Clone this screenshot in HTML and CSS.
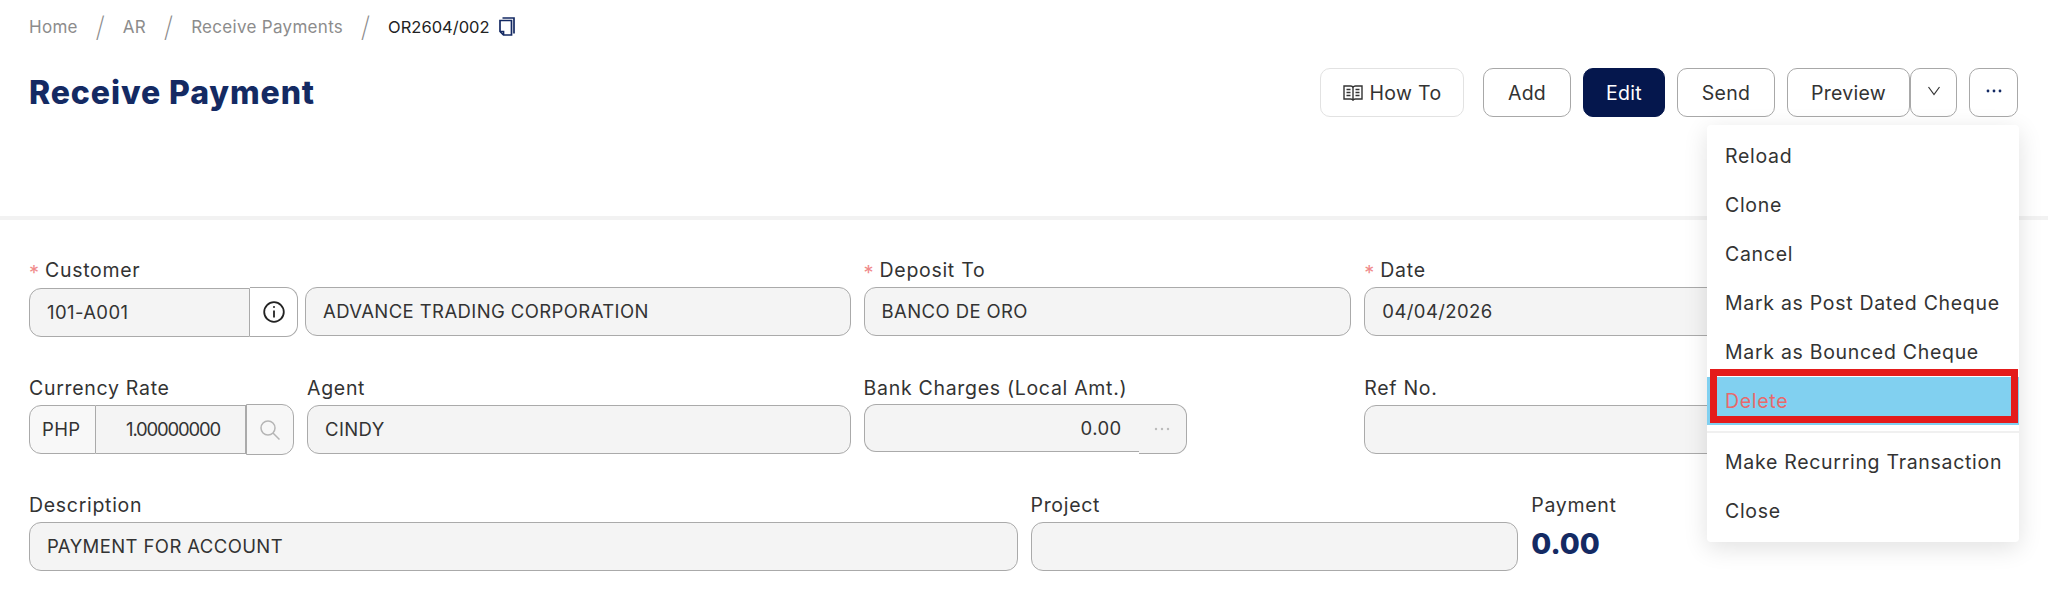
FILE: index.html
```html
<!DOCTYPE html>
<html lang="en">
<head>
    <meta charset="UTF-8">
    <title>Receive Payment</title>
    <link rel="stylesheet" href="styles.css">
</head>
<body>

    <!-- Breadcrumb and title -->
    <header class="page-header">
        <nav class="breadcrumb">
            <a class="crumb">Home</a>
            <span class="crumb-sep">/</span>
            <a class="crumb">AR</a>
            <span class="crumb-sep">/</span>
            <a class="crumb">Receive Payments</a>
            <span class="crumb-sep">/</span>
            <span class="crumb-current">OR2604/002</span>
            <svg class="copy-icon" viewBox="0 0 16 19" width="16" height="19" fill="none" stroke="#142a63" stroke-width="1.7">
                <path d="M3.5 1H15V16.5"/>
                <path d="M1 3.5H12.5V18H4.5L1 14.5Z"/>
                <path d="M1 14.5H4.5V18"/>
            </svg>
        </nav>

        <div class="title-row">
            <h1 class="page-title">Receive Payment</h1>
            <div class="toolbar">
                <button class="btn btn-light">
                    <svg class="book-icon" viewBox="0 0 20 16" width="20" height="16" fill="none" stroke="#333" stroke-width="1.4">
                        <path d="M1 1H7.5C8.8 1 10 1.8 10 3C10 1.8 11.2 1 12.5 1H19V14H12.5C11.2 14 10 14.5 10 15.5C10 14.5 8.8 14 7.5 14H1Z"/>
                        <path d="M10 3V15.5"/>
                        <path d="M3.5 4.5H7.5M3.5 7.5H7.5M3.5 10.5H7.5M12.5 4.5H16.5M12.5 7.5H16.5M12.5 10.5H16.5"/>
                    </svg>
                    How To
                </button>
                <button class="btn btn-add">Add</button>
                <button class="btn btn-primary">Edit</button>
                <button class="btn btn-send">Send</button>
                <div class="btn-group">
                    <button class="btn btn-preview">Preview</button>
                    <button class="btn btn-caret">
                        <svg viewBox="0 0 14 10" width="14" height="10" fill="none" stroke="#333" stroke-width="1.2"><path d="M1.5 1L7 8.5L12.5 1"/></svg>
                    </button>
                </div>
                <button class="btn btn-more">
                    <svg viewBox="0 0 16 4" width="16" height="4" fill="#142a63"><circle cx="2" cy="2" r="1.4"/><circle cx="8" cy="2" r="1.4"/><circle cx="14" cy="2" r="1.4"/></svg>
                </button>
            </div>
        </div>
    </header>

    <!-- Form -->
    <main class="form-grid">
        <div class="field span-5">
            <label class="field-label"><span class="required">*</span>Customer</label>
            <div class="field-row">
                <div class="input-group group-customer">
                    <div class="input input-code">101-A001</div>
                    <div class="addon addon-info">
                        <svg viewBox="0 0 22 22" width="22" height="22" fill="none" stroke="#222" stroke-width="1.8">
                            <circle cx="11" cy="11" r="9.8"/>
                            <path d="M11 9.5V16.5"/>
                            <circle cx="11" cy="6" r="0.4" fill="#222" stroke-width="1.2"/>
                        </svg>
                    </div>
                </div>
                <div class="input grow">ADVANCE TRADING CORPORATION</div>
            </div>
        </div>
        <div class="field span-3">
            <label class="field-label"><span class="required">*</span>Deposit To</label>
            <div class="input">BANCO DE ORO</div>
        </div>
        <div class="field span-3">
            <label class="field-label"><span class="required">*</span>Date</label>
            <div class="input">04/04/2026</div>
        </div>

        <div class="field-split span-5">
            <div class="field field-currency">
                <label class="field-label">Currency Rate</label>
                <div class="input-group group-currency">
                    <div class="input input-cur">PHP</div>
                    <div class="input input-rate">1.00000000</div>
                    <div class="addon addon-search">
                        <svg viewBox="0 0 22 22" width="22" height="22" fill="none" stroke="#b5b5b5" stroke-width="1.5">
                            <circle cx="9" cy="9" r="7"/>
                            <path d="M14 14L20.5 20.5"/>
                        </svg>
                    </div>
                </div>
            </div>
            <div class="field grow">
                <label class="field-label">Agent</label>
                <div class="input">CINDY</div>
            </div>
        </div>
        <div class="field span-3">
            <label class="field-label">Bank Charges (Local Amt.)</label>
            <div class="input-group group-charges">
                <div class="input input-amount">0.00</div>
                <div class="addon addon-dots">
                    <svg viewBox="0 0 16 4" width="16" height="4" fill="#bbb"><circle cx="2" cy="2" r="1.2"/><circle cx="8" cy="2" r="1.2"/><circle cx="14" cy="2" r="1.2"/></svg>
                </div>
            </div>
        </div>
        <div class="field span-3">
            <label class="field-label">Ref No.</label>
            <div class="input"></div>
        </div>

        <div class="field span-6">
            <label class="field-label">Description</label>
            <div class="input">PAYMENT FOR ACCOUNT</div>
        </div>
        <div class="field span-3">
            <label class="field-label">Project</label>
            <div class="input"></div>
        </div>
        <div class="field span-3">
            <label class="field-label">Payment</label>
            <div class="payment-amount">0.00</div>
        </div>
    </main>

    <!-- Dropdown menu, open over the form -->
    <ul class="dropdown">
        <li class="menu-item">Reload</li>
        <li class="menu-item">Clone</li>
        <li class="menu-item">Cancel</li>
        <li class="menu-item">Mark as Post Dated Cheque</li>
        <li class="menu-item">Mark as Bounced Cheque</li>
        <li class="menu-item menu-danger">Delete<span class="red-box"></span></li>
        <li class="menu-divider"></li>
        <li class="menu-item">Make Recurring Transaction</li>
        <li class="menu-item">Close</li>
    </ul>

</body>
</html>
```

FILE: styles.css
```css
body {
    margin: 0;
    background-color: #fff;
    color: #333;
    font-family: "Inter", "Liberation Sans", sans-serif;
    font-size: 19px;
    overflow: hidden;
}

/* Header */
.page-header {
    height: 220px;
    padding: 0 30px 0 29px;
    box-sizing: border-box;
    border-bottom: 4px solid #f2f2f2;
}

.breadcrumb {
    display: flex;
    align-items: center;
    height: 54px;
    font-size: 17px;
    letter-spacing: 0.3px;
    color: #8c8c8c;
}

.crumb-sep {
    width: 45px;
    text-align: center;
    font-size: 28px;
    font-weight: 200;
}

.crumb-current {
    color: #222;
    font-size: 16.5px;
    letter-spacing: 0;
}

.copy-icon {
    margin-left: 9px;
    margin-bottom: 1px;
}

.title-row {
    display: flex;
    justify-content: space-between;
    margin-top: 14px;
}

.page-title {
    margin: 0;
    font-size: 32px;
    font-weight: 800;
    letter-spacing: 0.9px;
    line-height: 49px;
    color: #142a63;
}

/* Toolbar buttons */
.toolbar {
    display: flex;
    align-items: center;
}

.btn {
    display: flex;
    align-items: center;
    justify-content: center;
    height: 49px;
    padding: 0;
    background: #fff;
    border: 1px solid #a8a8a8;
    border-radius: 10px;
    color: #333;
    font-family: inherit;
    font-size: 19.5px;
    letter-spacing: 0.3px;
    box-sizing: border-box;
}

.btn-light {
    width: 144px;
    margin-right: 19px;
    gap: 7px;
    border-color: #e2e2e2;
}

.btn-add {
    width: 88px;
    margin-right: 12px;
}

.btn-primary {
    width: 82px;
    margin-right: 12px;
    background: #05174d;
    border-color: #05174d;
    color: #fff;
}

.btn-send {
    width: 98px;
    margin-right: 12px;
}

.btn-group {
    display: flex;
    margin-right: 12px;
}

.btn-preview {
    width: 123px;
}

.btn-caret {
    width: 47px;
    padding-bottom: 4px;
}

.btn-more {
    width: 49px;
    padding-bottom: 4px;
}

/* Form */
.form-grid {
    display: grid;
    grid-template-columns: repeat(12, 1fr);
    column-gap: 13px;
    row-gap: 37px;
    padding: 36px 29px 0;
}

.span-3 { grid-column: span 3; }
.span-5 { grid-column: span 5; }
.span-6 { grid-column: span 6; }

.field {
    min-width: 0;
}

.field-split {
    display: flex;
    gap: 13px;
}

.field-currency {
    width: 265px;
    flex-shrink: 0;
}

.field-label {
    display: block;
    height: 31px;
    line-height: 29px;
    font-size: 19.5px;
    letter-spacing: 0.7px;
    white-space: nowrap;
}

.required {
    display: inline-block;
    width: 16px;
    color: #f08a8a;
    font-size: 20px;
    letter-spacing: 0;
    vertical-align: -3px;
}

.field-row {
    display: flex;
    gap: 7px;
}

.input {
    height: 49px;
    line-height: 47px;
    padding: 0 17px;
    background: #f4f4f4;
    border: 1px solid #aaa;
    border-radius: 12px;
    font-size: 18.5px;
    letter-spacing: 0.4px;
    color: #333;
    box-sizing: border-box;
    white-space: nowrap;
}

.grow {
    flex: 1;
    min-width: 0;
}

.input-group {
    display: flex;
    align-items: center;
}

.group-customer {
    width: 269px;
    flex-shrink: 0;
}

.input-code {
    width: 221px;
    border-radius: 12px 0 0 12px;
}

.addon {
    display: flex;
    align-items: center;
    justify-content: center;
    box-sizing: border-box;
    border: 1px solid #aaa;
    border-left: 0;
    border-radius: 0 12px 12px 0;
}

.addon-info {
    width: 48px;
    height: 50px;
    background: #fff;
}

.input-cur {
    width: 67px;
    padding: 0 12px;
    border-radius: 12px 0 0 12px;
    background: #f8f8f8;
}

.input-rate {
    width: 150px;
    padding: 0 0 0 5px;
    text-align: center;
    letter-spacing: -1.2px;
    border-left: 0;
    border-radius: 0;
}

.addon-search {
    width: 48px;
    height: 51px;
    margin: -1px 0;
    background: #f7f7f7;
    border-left: 1px solid #aaa;
}

.group-charges {
    width: 323px;
    align-items: flex-start;
    margin-top: -1px;
}

.input-amount {
    flex: 1;
    height: 48px;
    text-align: right;
    padding-right: 17px;
    border-right: 0;
    border-radius: 12px 0 0 12px;
}

.addon-dots {
    width: 48px;
    height: 50px;
    background: #f4f4f4;
}

.payment-amount {
    font-size: 29px;
    font-weight: 800;
    line-height: 44px;
    color: #142a63;
}

/* Dropdown */
.dropdown {
    position: absolute;
    top: 125px;
    left: 1707px;
    width: 312px;
    margin: 0;
    padding: 7px 0 6px;
    list-style: none;
    background: #fff;
    border-radius: 4px;
    box-shadow: 0 6px 24px rgba(0, 0, 0, 0.12);
    box-sizing: border-box;
}

.menu-item {
    position: relative;
    height: 49px;
    line-height: 49px;
    padding: 0 18px;
    font-size: 19.5px;
    letter-spacing: 0.7px;
    color: #333;
    white-space: nowrap;
}

.menu-danger {
    height: 48px;
    background: #81d0f0;
    color: #e8696b;
}

.menu-divider {
    height: 2px;
    margin: 6px 0 5px;
    background: #f0f0f0;
}

.red-box {
    position: absolute;
    top: -8px;
    left: 3px;
    right: 1px;
    bottom: 2px;
    border: 7px solid #e41b1b;
}
```
